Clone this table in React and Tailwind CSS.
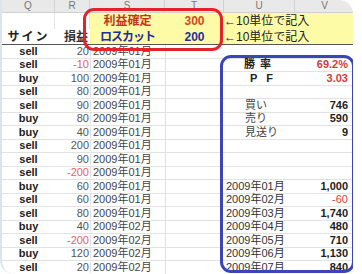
import React from 'react';

// sheet rows: sign, profit/loss, month
const trades = [
  ['sell', '20', '2009年01月'],
  ['sell', '-10', '2009年01月'],
  ['buy', '100', '2009年01月'],
  ['sell', '80', '2009年01月'],
  ['sell', '90', '2009年01月'],
  ['buy', '80', '2009年01月'],
  ['buy', '40', '2009年01月'],
  ['sell', '200', '2009年01月'],
  ['sell', '90', '2009年01月'],
  ['sell', '-200', '2009年01月'],
  ['buy', '60', '2009年01月'],
  ['sell', '60', '2009年01月'],
  ['sell', '80', '2009年01月'],
  ['buy', '40', '2009年02月'],
  ['sell', '-200', '2009年02月'],
  ['buy', '120', '2009年02月'],
  ['sell', '20', '2009年02月'],
];

const monthly = [
  ['2009年01月', '1,000'],
  ['2009年02月', '-60'],
  ['2009年03月', '1,740'],
  ['2009年04月', '480'],
  ['2009年05月', '710'],
  ['2009年06月', '1,130'],
  ['2009年07月', '840'],
];

const cols = 'grid grid-cols-[53px_35px_75px_59px_71px_60px]';

function Stat({ i }) {
  if (i === 1) return [<div key="u" className="flex gap-[5px] pl-[20px] font-bold text-[#222]"><span>勝</span><span>率</span></div>, <div key="v" className="text-right pr-[7px] font-bold text-[#d23a3a]">69.2%</div>];
  if (i === 2) return [<div key="u" className="flex gap-[9px] pl-[26px] font-bold text-[#222]"><span>P</span><span>F</span></div>, <div key="v" className="text-right pr-[7px] font-bold text-[#d23a3a]">3.03</div>];
  if (i === 4) return [<div key="u" className="pl-[21px] text-[#444]">買い</div>, <div key="v" className="text-right pr-[7px] font-bold text-[#222]">746</div>];
  if (i === 5) return [<div key="u" className="pl-[21px] text-[#444]">売り</div>, <div key="v" className="text-right pr-[7px] font-bold text-[#222]">590</div>];
  if (i === 6) return [<div key="u" className="pl-[21px] text-[#444]">見送り</div>, <div key="v" className="text-right pr-[7px] font-bold text-[#222]">9</div>];
  if (i >= 10) {
    const [m, v] = monthly[i - 10];
    const neg = v.startsWith('-');
    return [
      <div key="u" className="pl-[2px] text-[#333] whitespace-nowrap">{m}</div>,
      <div key="v" className={neg ? 'text-right pr-[7px] text-[#d23a3a]' : 'text-right pr-[7px] font-bold text-[#222]'}>{v}</div>,
    ];
  }
  return [<div key="u" />, <div key="v" />];
}

export default function App() {
  return (
    <div className="w-[362px] h-[274px] bg-white overflow-hidden font-['Liberation_Sans','Noto_Sans_CJK_JP',sans-serif] text-[11px] leading-none">
      <div className="relative w-[353px] h-[274px] rounded-tr-[14px] rounded-bl-[14px] overflow-hidden border-l-2 border-[#dde4ee] bg-white">
        {/* column letters */}
        <div className={`${cols} h-[13px] bg-[#e9e9ea] text-[10px] text-[#777] border-b border-[#cfcfcf]`}>
          {['Q', 'R', 'S', 'T', 'U', 'V'].map((c) => (
            <div key={c} className="flex items-center justify-center border-r border-[#d2d2d2]">{c}</div>
          ))}
        </div>

        {/* settings rows */}
        <div className={`${cols} h-[16px]`}>
          <div className="border-r border-[#e4e4e4]" />
          <div className="border-r border-[#e4e4e4]" />
          <div className="flex items-center justify-center bg-[#fdfba6] font-bold text-[12px] text-[#c4361c]">利益確定</div>
          <div className="flex items-center justify-center bg-[#fdfba6] font-bold text-[12px] text-[#d2491a]">300</div>
          <div className="col-span-2 flex items-center bg-[#fdfba6] text-[12px] text-[#222] whitespace-nowrap">←10単位で記入</div>
        </div>
        <div className={`${cols} h-[16px] border-b border-[#555]`}>
          <div className="flex items-center justify-center font-bold text-[12px] tracking-[2px] text-[#222]">サイン</div>
          <div className="flex items-center justify-end pr-[2px] font-bold text-[12px] text-[#333]">損益</div>
          <div className="flex items-center justify-center bg-[#fdfba6] font-bold text-[12px] tracking-[-1px] text-[#1f2e9a]">ロスカット</div>
          <div className="flex items-center justify-center bg-[#fdfba6] font-bold text-[12px] text-[#1f2e9a]">200</div>
          <div className="col-span-2 flex items-center bg-[#fdfba6] text-[12px] text-[#222] whitespace-nowrap">←10単位で記入</div>
        </div>

        {/* trades */}
        {trades.map(([sign, pl, month], i) => {
          const neg = pl.startsWith('-');
          return (
            <div key={i} className={`${cols} h-[13.5px] items-center border-b border-[#e2e2e2]`}>
              <div className="text-center font-bold text-[#222]">{sign}</div>
              <div className={neg ? 'text-right pr-[1px] text-[#e06464]' : 'text-right pr-[1px] text-[#555]'}>{pl}</div>
              <div className="pl-[2px] text-[#444] whitespace-nowrap border-l border-[#e2e2e2]">{month}</div>
              <div className="h-full border-l border-[#e2e2e2]" />
              <Stat i={i} />
            </div>
          );
        })}

        {/* highlight frames */}
        <div className="absolute left-[81px] top-[8px] w-[140px] h-[43px] rounded-[11px] border-[3px] border-[#e3232b]" />
        <div className="absolute left-[218px] top-[55px] w-[135px] h-[218px] rounded-[11px] border-[3px] border-[#3a46b6]" />
      </div>
    </div>
  );
}
